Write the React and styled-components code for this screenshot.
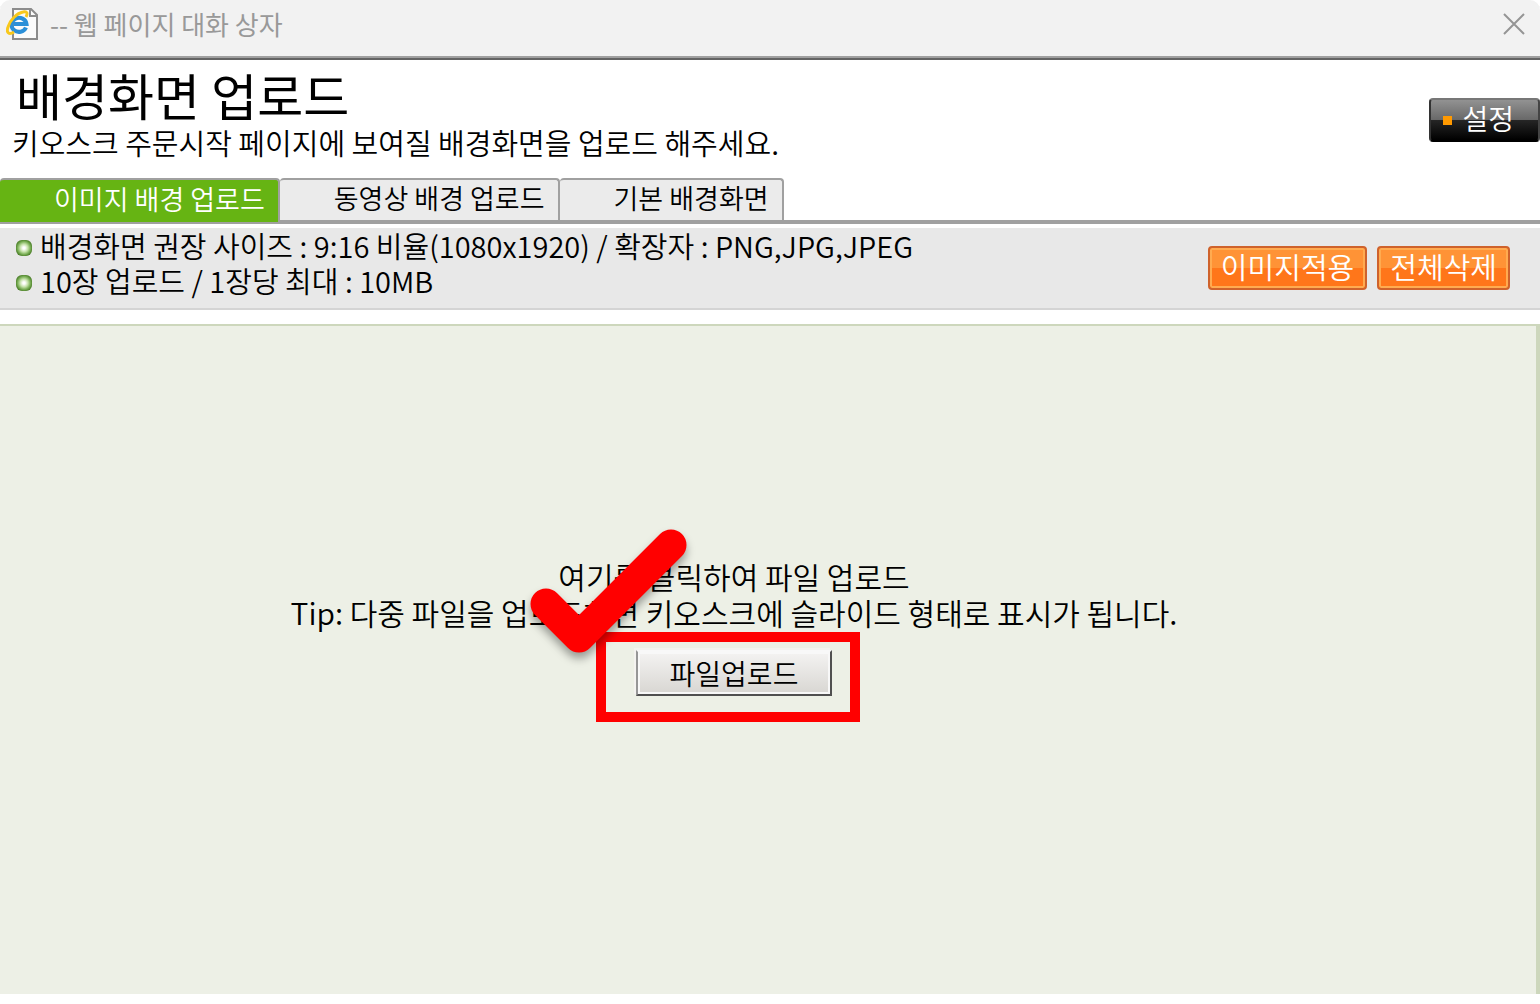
import React, { useState } from 'react';
import styled, { createGlobalStyle } from 'styled-components';

const GlobalStyle = createGlobalStyle`
  * {
    box-sizing: border-box;
  }

  body {
    margin: 0;
    background: #fff;
    color: #000;
    font-family: "Noto Sans CJK KR", sans-serif;
    font-weight: 350;
  }

  button {
    font-family: inherit;
    font-weight: inherit;
    cursor: pointer;
  }
`;

const Dialog = styled.div`
  display: flex;
  flex-direction: column;
  min-height: 100vh;
  padding-bottom: 10px;
`;

const TitleBar = styled.header`
  display: flex;
  align-items: center;
  height: 60px;
  padding: 0 14px 10px 6px;
  background: #f2f2f2;
  border-bottom: 2px solid #646464;
  box-shadow: inset 0 -2px #a0a0a0;
  border-radius: 10px 10px 0 0;
`;

const WindowTitle = styled.span`
  flex: 1;
  margin-left: 10px;
  color: #999;
  font-size: 26px;
  font-weight: 400;
  line-height: 32px;
`;

const CloseButton = styled.button`
  display: flex;
  padding: 0;
  border: 0;
  background: none;
`;

const Heading = styled.div`
  display: flex;
  align-items: flex-start;
  justify-content: space-between;
  height: 118px;
  padding-left: 12px;
`;

const HeadingText = styled.div`
  padding-top: 4px;
`;

const Title = styled.h1`
  margin: 0;
  padding-left: 4px;
  font-size: 50px;
  font-weight: 400;
  line-height: 60px;
`;

const Text = styled.p`
  margin: 0;
  font-size: ${({ $large }) => ($large ? '30px' : '29px')};
  line-height: 36px;
`;

const SettingButton = styled.button`
  display: flex;
  align-items: center;
  gap: 10px;
  height: 44px;
  margin-top: 38px;
  padding: 0 24px 4px 12px;
  border: 2px solid;
  border-color: #777 #444 #000 #333;
  border-radius: 4px;
  background: linear-gradient(#929292, #686868 50%, #262626 50%, #000);
  color: #fff;
  font-size: 28px;
  line-height: 36px;

  &::before {
    content: "";
    width: 9px;
    height: 9px;
    margin-top: 4px;
    background: #ff9900;
  }
`;

const TabList = styled.nav`
  display: flex;
  height: 46px;
  border-bottom: 4px solid #a0a0a0;
`;

const Tab = styled.button`
  height: ${({ $active }) => ($active ? '44px' : '42px')};
  padding: 0 13px 4px 54px;
  border: 0;
  border-top: 2px solid #a0a0a0;
  border-right: 2px solid #a0a0a0;
  border-radius: 4px 4px 0 0;
  background: ${({ $active }) => ($active ? '#66b413' : '#ebebeb')};
  color: ${({ $active }) => ($active ? '#fff' : '#000')};
  font-size: 27px;
  line-height: 36px;
  white-space: nowrap;
`;

const InfoBar = styled.section`
  display: flex;
  align-items: center;
  justify-content: space-between;
  height: 82px;
  margin: 4px 0 14px;
  padding: 0 30px 10px 16px;
  background: #e8e8e8;
  border-bottom: 2px solid #d4d4d4;
`;

const InfoList = styled.ul`
  margin: 0;
  padding: 0;
  list-style: none;
`;

const InfoItem = styled.li`
  display: flex;
  align-items: center;
  gap: 8px;
  font-size: 29px;
  line-height: 35px;

  &::before {
    content: "";
    width: 16px;
    height: 16px;
    margin-top: 4px;
    border-radius: 6px;
    background: radial-gradient(#fff 10%, #c4e0a8 35%, #7fb35c 55%, #3c7018 80%);
  }
`;

const Actions = styled.div`
  display: flex;
  gap: 10px;
  margin-top: 10px;
`;

const ActionButton = styled.button`
  height: 44px;
  padding: 0 11px 4px;
  border: 2px solid #cf622b;
  border-radius: 4px;
  background: linear-gradient(#ff9336 50%, #ff761a 50%);
  box-shadow: inset 0 0 0 2px #ffab50;
  color: #fff;
  font-size: 29px;
  line-height: 36px;
`;

const DropArea = styled.main`
  flex: 1;
  display: flex;
  flex-direction: column;
  align-items: center;
  padding: 232px 68px 40px 0;
  border-top: 2px solid #cdd7bc;
  border-right: 4px solid #cdd7bc;
  background: #edf0e6;
  text-align: center;
`;

const UploadSlot = styled.div`
  position: relative;
  margin-top: 20px;
`;

const UploadButton = styled.button`
  display: block;
  height: 46px;
  padding: 0 32px;
  border: 2px solid;
  border-color: #f8f8f8 #505050 #505050 #969696;
  background: linear-gradient(#f4f3f2, #d8d6d2);
  box-shadow: inset 0 0 0 2px #f8f8f8, -2px -2px 0 #f4f3f0;
  font-size: 28px;
  line-height: 36px;
`;

const Highlight = styled.div`
  position: absolute;
  inset: -18px -28px -26px -40px;
  border: 10px solid #ff0000;
  pointer-events: none;
`;

const CheckMark = styled.svg`
  position: absolute;
  left: -116px;
  top: -132px;
  filter: drop-shadow(0 6px 4px rgba(0, 0, 0, 0.35));
  pointer-events: none;
`;

const tabs = ['이미지 배경 업로드', '동영상 배경 업로드', '기본 배경화면'];

const PageIcon = () => (
  <svg width="34" height="34" viewBox="0 0 34 34" aria-hidden="true">
    <path d="M7 2h18l6 6v24H7z" fill="#fbfbfb" stroke="#8c8c8c" strokeWidth="2" />
    <path d="M24 2v7h7" fill="none" stroke="#8c8c8c" strokeWidth="2" />
    <path
      d="M20 20.500A7.500 7 0 1 1 20.500 17H8"
      fill="none"
      stroke="#2b8fd8"
      strokeWidth="4"
    />
    <path
      d="M8 25C3 28 0 26 2 20C4 13 11 6 17 5C21 4 22 6 20 10"
      fill="none"
      stroke="#f8c81c"
      strokeWidth="3"
    />
  </svg>
);

const App = () => {
  const [active, setActive] = useState(0);

  return (
    <Dialog>
      <GlobalStyle />
      <TitleBar>
        <PageIcon />
        <WindowTitle>-- 웹 페이지 대화 상자</WindowTitle>
        <CloseButton aria-label="닫기">
          <svg width="24" height="24" viewBox="0 0 24 24">
            <path d="M2 2l20 20M22 2L2 22" stroke="#959595" strokeWidth="2" />
          </svg>
        </CloseButton>
      </TitleBar>

      <Heading>
        <HeadingText>
          <Title>배경화면 업로드</Title>
          <Text>키오스크 주문시작 페이지에 보여질 배경화면을 업로드 해주세요.</Text>
        </HeadingText>
        <SettingButton>설정</SettingButton>
      </Heading>

      <TabList>
        {tabs.map((name, i) => (
          <Tab key={name} $active={i === active} onClick={() => setActive(i)}>
            {name}
          </Tab>
        ))}
      </TabList>

      <InfoBar>
        <InfoList>
          <InfoItem>배경화면 권장 사이즈 : 9:16 비율(1080x1920) / 확장자 : PNG,JPG,JPEG</InfoItem>
          <InfoItem>10장 업로드 / 1장당 최대 : 10MB</InfoItem>
        </InfoList>
        <Actions>
          <ActionButton>이미지적용</ActionButton>
          <ActionButton>전체삭제</ActionButton>
        </Actions>
      </InfoBar>

      <DropArea>
        <Text $large>여기를 클릭하여 파일 업로드</Text>
        <Text $large>Tip: 다중 파일을 업로드하면 키오스크에 슬라이드 형태로 표시가 됩니다.</Text>
        <UploadSlot>
          <UploadButton>파일업로드</UploadButton>
          <Highlight />
          <CheckMark width="180" height="150" viewBox="0 0 180 150" aria-hidden="true">
            <path
              d="M26 86l33 33 92-92"
              fill="none"
              stroke="#ff0000"
              strokeWidth="31"
              strokeLinecap="round"
              strokeLinejoin="round"
            />
          </CheckMark>
        </UploadSlot>
      </DropArea>
    </Dialog>
  );
};

export default App;
